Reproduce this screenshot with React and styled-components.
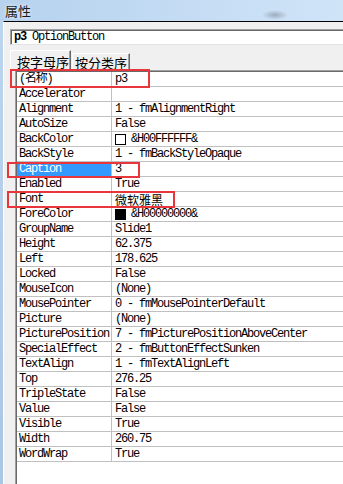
import React from 'react';
import styled, { createGlobalStyle } from 'styled-components';

const GlobalStyle = createGlobalStyle`
  html, body {
    margin: 0;
    padding: 0;
    overflow: hidden;
    background: #f0f0f0;
  }
`;

const MONO = `"Liberation Mono", "Noto Sans CJK SC", monospace`;
const CJK = `"Noto Sans CJK SC", "Noto Sans", sans-serif`;

const properties = [
  { name: '(名称)', value: 'p3' },
  { name: 'Accelerator', value: '' },
  { name: 'Alignment', value: '1 - fmAlignmentRight' },
  { name: 'AutoSize', value: 'False' },
  { name: 'BackColor', value: '&H00FFFFFF&', swatch: '#ffffff' },
  { name: 'BackStyle', value: '1 - fmBackStyleOpaque' },
  { name: 'Caption', value: '3', selected: true },
  { name: 'Enabled', value: 'True' },
  { name: 'Font', value: '微软雅黑', cjk: true },
  { name: 'ForeColor', value: '&H00000000&', swatch: '#000000' },
  { name: 'GroupName', value: 'Slide1' },
  { name: 'Height', value: '62.375' },
  { name: 'Left', value: '178.625' },
  { name: 'Locked', value: 'False' },
  { name: 'MouseIcon', value: '(None)' },
  { name: 'MousePointer', value: '0 - fmMousePointerDefault' },
  { name: 'Picture', value: '(None)' },
  { name: 'PicturePosition', value: '7 - fmPicturePositionAboveCenter' },
  { name: 'SpecialEffect', value: '2 - fmButtonEffectSunken' },
  { name: 'TextAlign', value: '1 - fmTextAlignLeft' },
  { name: 'Top', value: '276.25' },
  { name: 'TripleState', value: 'False' },
  { name: 'Value', value: 'False' },
  { name: 'Visible', value: 'True' },
  { name: 'Width', value: '260.75' },
  { name: 'WordWrap', value: 'True' },
];

// red annotation frames drawn over the grid
const marks = [
  { left: 10, top: 69, width: 140, height: 19 },
  { left: 7, top: 162, width: 133, height: 16 },
  { left: 7, top: 191, width: 168, height: 17 },
];

function PropertyRow({ name, value, swatch, selected, cjk }) {
  return (
    <Row>
      <NameCell $selected={selected}>{name}</NameCell>
      <ValueCell $cjk={cjk}>
        {swatch && <Swatch $color={swatch} />}
        {value}
      </ValueCell>
    </Row>
  );
}

export default function App() {
  return (
    <>
      <GlobalStyle />
      <Window>
        <TitleBar>
          <Title>属性</Title>
          <Blur />
        </TitleBar>
        <Body>
          <FrameEdge />
          <Panel>
            <Combo>
              <b>p3</b>&nbsp;OptionButton
            </Combo>
            <Tabs>
              <Tab $active>按字母序</Tab>
              <Tab>按分类序</Tab>
            </Tabs>
            <Grid>
              {properties.map((p) => (
                <PropertyRow key={p.name} {...p} />
              ))}
            </Grid>
          </Panel>
        </Body>
        {marks.map((m, i) => (
          <Mark key={i} style={{ left: m.left, top: m.top, width: m.width, height: m.height }} />
        ))}
      </Window>
    </>
  );
}

const Window = styled.div`
  position: relative;
  width: 343px;
  height: 484px;
  display: flex;
  flex-direction: column;
  overflow: hidden;
  background: #f0f0f0;
`;

const TitleBar = styled.div`
  position: relative;
  height: 21px;
  flex-shrink: 0;
  display: flex;
  align-items: center;
  padding-left: 5px;
  background: linear-gradient(90deg, #b6d2ee 0%, #c3dbf3 50%, #d0e4f8 100%);
`;

const Title = styled.span`
  font-family: ${CJK};
  font-size: 13px;
  color: #1a1a1a;
  text-shadow: 0 0 4px #ffffff;
  line-height: 21px;
`;

const Blur = styled.div`
  position: absolute;
  left: 262px;
  top: 10px;
  width: 26px;
  height: 10px;
  border-radius: 50%;
  background: radial-gradient(ellipse, rgba(120, 130, 145, 0.55), rgba(120, 130, 145, 0) 70%);
`;

const Body = styled.div`
  flex: 1;
  display: flex;
  min-height: 0;
`;

const FrameEdge = styled.div`
  width: 3px;
  flex-shrink: 0;
  background: linear-gradient(180deg, #bcd5ee, #a9c6e4);
`;

const Panel = styled.div`
  flex: 1;
  display: flex;
  flex-direction: column;
  min-width: 0;
  border-top: 1px solid #000;
  border-left: 1px solid #ffffff;
  background: #f0f0f0;
  padding: 7px 0 0 5px;
`;

const Combo = styled.div`
  height: 14px;
  flex-shrink: 0;
  overflow: hidden;
  margin-left: 1px;
  padding-left: 3px;
  border-top: 1px solid #a0a0a0;
  border-left: 1px solid #a0a0a0;
  box-shadow: inset 1px 1px 0 #696969;
  border-bottom: 1px solid #e3e3e3;
  background: #fff;
  font-family: ${MONO};
  font-size: 12px;
  letter-spacing: -1.2px;
  line-height: 15px;
  white-space: nowrap;
  color: #000;

  b {
    font-weight: 700;
  }
`;

const Tabs = styled.div`
  display: flex;
  align-items: flex-end;
  height: 20px;
  flex-shrink: 0;
  margin-top: 5px;
  padding-left: 1px;
`;

const Tab = styled.div`
  width: ${(p) => (p.$active ? 61 : 58)}px;
  height: ${(p) => (p.$active ? 20 : 17)}px;
  box-sizing: border-box;
  padding-left: ${(p) => (p.$active ? 6 : 2)}px;
  padding-top: ${(p) => (p.$active ? 4 : 2)}px;
  margin-right: ${(p) => (p.$active ? 1 : 0)}px;
  border-top: 1px solid #fff;
  border-left: 1px solid #fff;
  border-right: 1px solid #696969;
  box-shadow: inset -1px 0 0 #a0a0a0;
  background: #f0f0f0;
  font-family: ${CJK};
  font-size: 13px;
  line-height: 13px;
  color: #000;
  white-space: nowrap;
`;

const Grid = styled.div`
  flex: 1;
  margin-left: 6px;
  border-top: 1px solid #a0a0a0;
  border-left: 1px solid #a0a0a0;
  box-shadow: inset 1px 1px 0 #696969;
  background: #fff;
  padding: 1px 0 0 1px;
`;

const Row = styled.div`
  display: flex;
  height: 14px;
  border-bottom: 1px solid #c0c0c0;
  font-family: ${MONO};
  font-size: 12px;
  letter-spacing: -1.2px;
  line-height: 15px;
  white-space: nowrap;
  overflow: hidden;
`;

const NameCell = styled.div`
  width: 92px;
  flex-shrink: 0;
  padding-left: 2px;
  border-right: 1px solid #c0c0c0;
  background: ${(p) => (p.$selected ? '#3399ff' : '#fff')};
  color: ${(p) => (p.$selected ? '#fff' : '#000')};
  overflow: hidden;
`;

const ValueCell = styled.div`
  flex: 1;
  display: flex;
  align-items: center;
  padding-left: 3px;
  color: #000;
  font-family: ${(p) => (p.$cjk ? CJK : MONO)};
  font-size: 12px;
  letter-spacing: ${(p) => (p.$cjk ? 0 : -1.2)}px;
`;

const Swatch = styled.span`
  width: 9px;
  height: 9px;
  margin-right: 5px;
  border: 1px solid #000;
  background: ${(p) => p.$color};
  flex-shrink: 0;
`;

const Mark = styled.div`
  position: absolute;
  box-sizing: border-box;
  border: 2px solid #e8363c;
  pointer-events: none;
`;
